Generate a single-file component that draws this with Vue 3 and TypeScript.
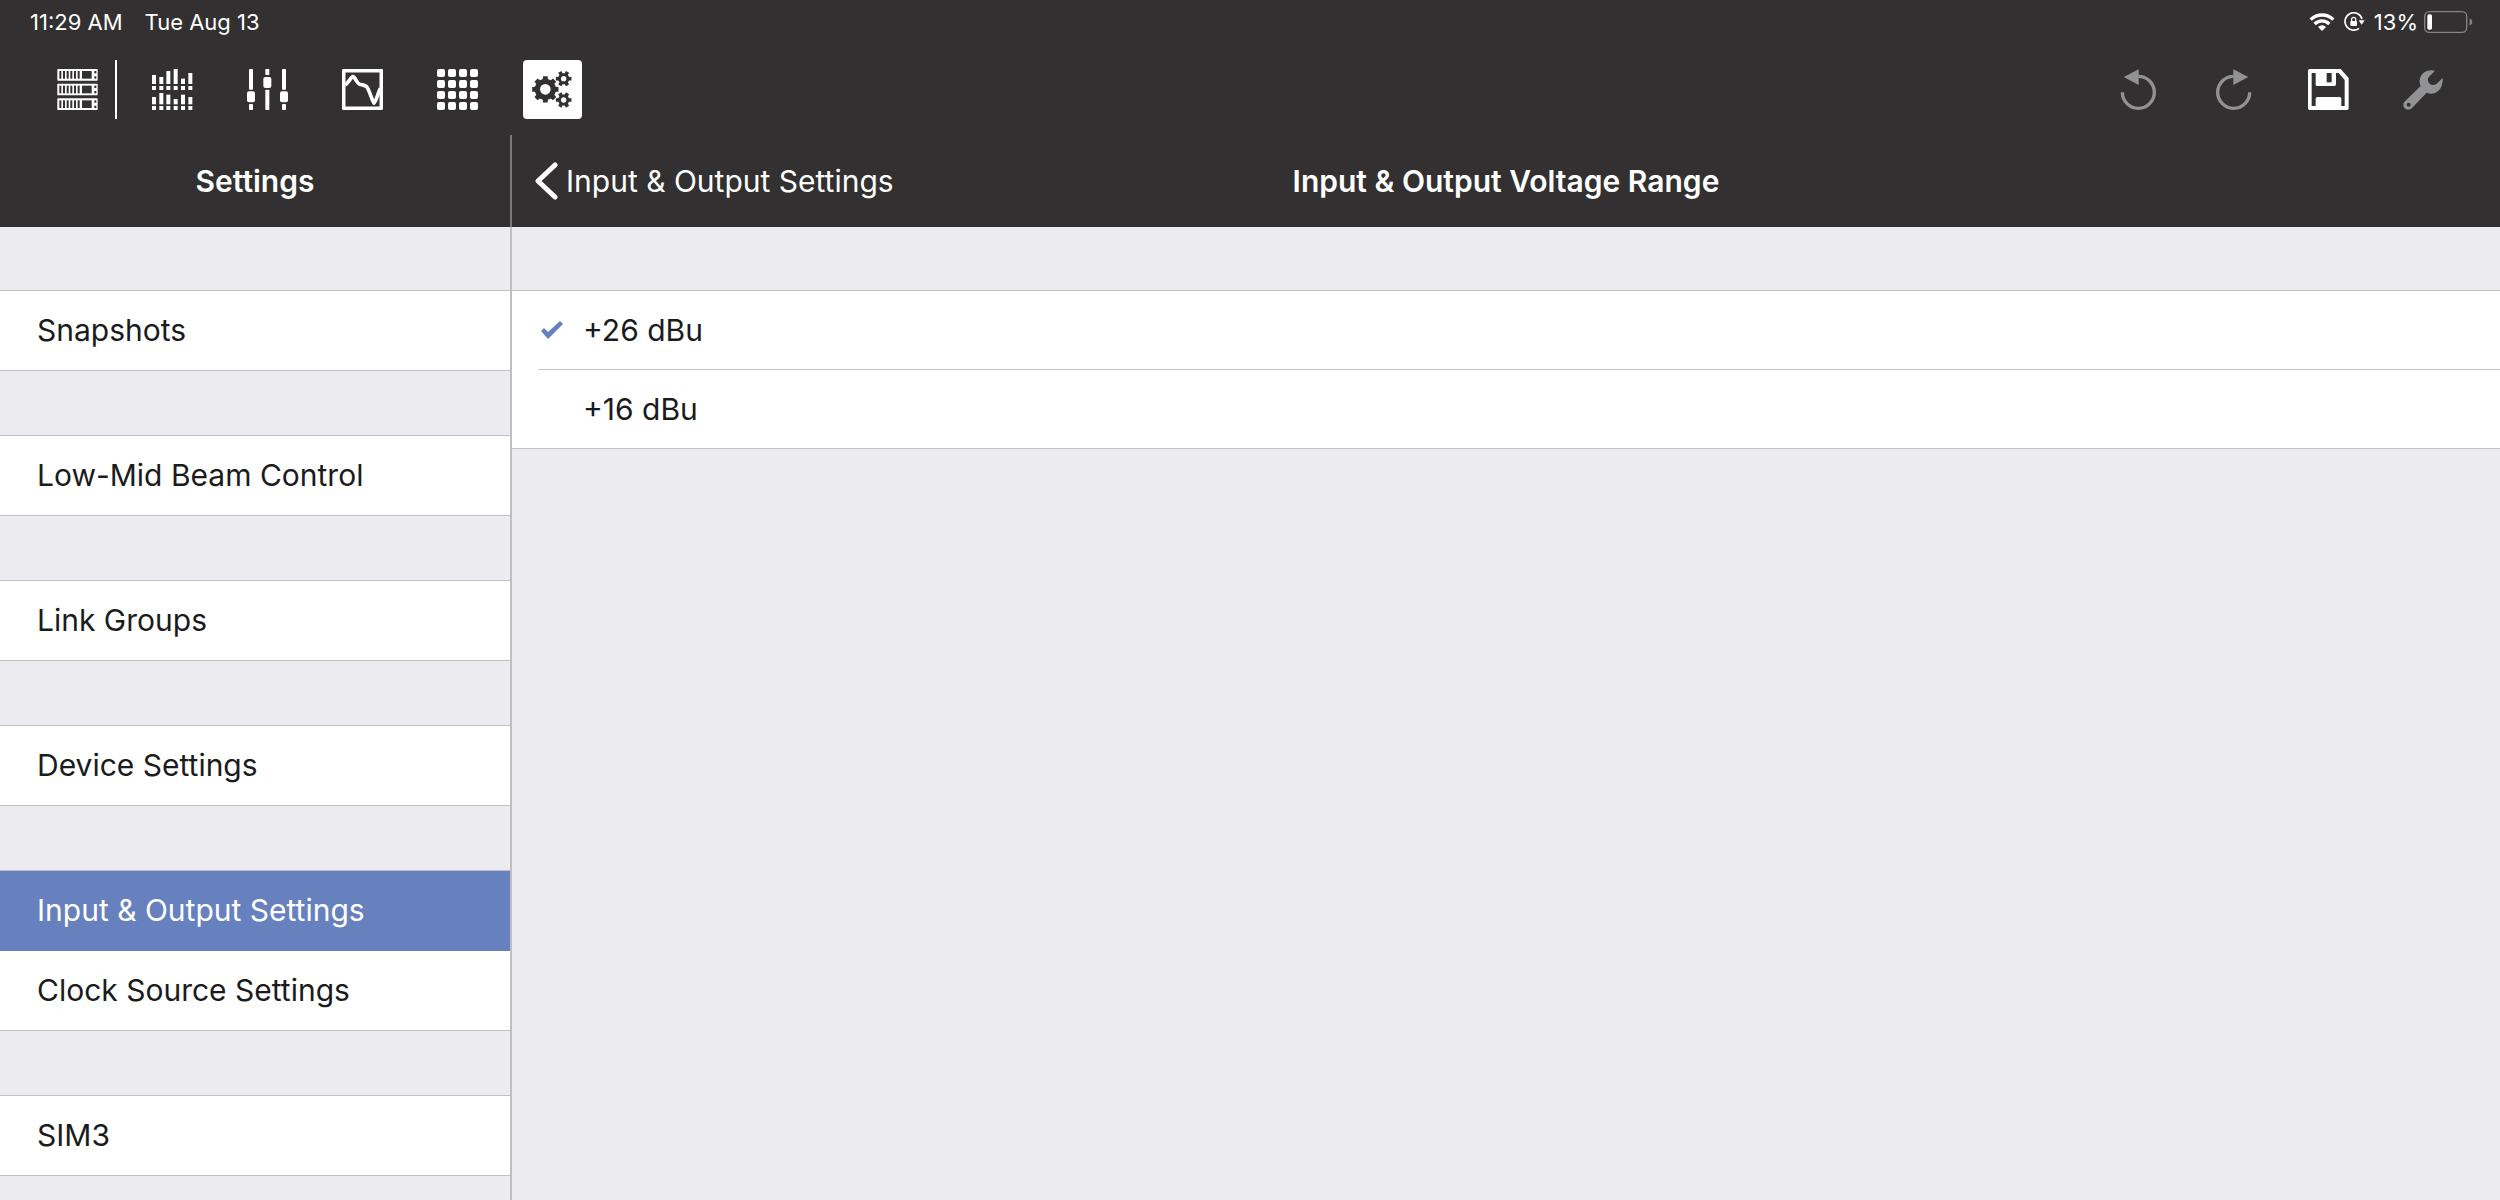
<script setup lang="ts">
import { ref } from 'vue'

interface MenuItem {
  id: string
  label: string
}

const menuGroups: MenuItem[][] = [
  [{ id: 'snapshots', label: 'Snapshots' }],
  [{ id: 'lmbc', label: 'Low-Mid Beam Control' }],
  [{ id: 'link-groups', label: 'Link Groups' }],
  [{ id: 'device', label: 'Device Settings' }],
  [
    { id: 'io', label: 'Input & Output Settings' },
    { id: 'clock', label: 'Clock Source Settings' },
  ],
  [{ id: 'sim3', label: 'SIM3' }],
]

const selectedMenu = ref('io')
const ranges = ['+26 dBu', '+16 dBu']
const selectedRange = ref('+26 dBu')

// Level meter columns: x, top of upper bar, top of lower bar
const meters = [
  [0, 18, 84],
  [22, 24, 72],
  [43, 6, 77],
  [65, 0, 90],
  [87, 29, 77],
  [109, 12, 84],
]

// Outline of a gear with a round hole, drawn with the even-odd rule
function gear(cx: number, cy: number, outer: number, body: number, hole: number, teeth: number): string {
  const step = (Math.PI * 2) / teeth
  const points: string[] = []
  for (let i = 0; i < teeth; i++) {
    const a = i * step
    const corners: [number, number][] = [
      [body, -0.3],
      [outer, -0.22],
      [outer, 0.22],
      [body, 0.3],
    ]
    for (const [r, k] of corners) {
      const x = cx + r * Math.cos(a + k * step)
      const y = cy + r * Math.sin(a + k * step)
      points.push(`${x.toFixed(1)} ${y.toFixed(1)}`)
    }
  }
  return (
    `M${points.join('L')}Z` +
    `M${cx - hole} ${cy}a${hole} ${hole} 0 1 0 ${hole * 2} 0a${hole} ${hole} 0 1 0 ${-hole * 2} 0Z`
  )
}

const gears = gear(67, 88, 40, 32, 16, 8) + gear(122, 56, 24, 17, 8, 6) + gear(122, 120, 24, 17, 8, 6)
</script>

<template>
  <div class="app">
    <header class="status-bar">
      <div class="status-left">
        <span>11:29 AM</span>
        <span>Tue Aug 13</span>
      </div>
      <div class="status-right">
        <svg class="wifi" viewBox="0 0 76 54" fill="none" stroke="#fff" stroke-width="10">
          <path d="M4 20a48 48 0 0 1 68 0" />
          <path d="M16 33a31 31 0 0 1 44 0" />
          <path d="M38 54L26 42a17 17 0 0 1 24 0Z" fill="#fff" stroke="none" />
        </svg>
        <svg class="rotation" viewBox="0 0 63 60">
          <path d="M54 21A26 26 0 1 0 45 49" fill="none" stroke="#fff" stroke-width="5" />
          <path d="M44 25H62L53 38Z" fill="#fff" />
          <rect x="19" y="27" width="20" height="15" rx="2" fill="#fff" />
          <path d="M23 28V22a6 6 0 0 1 12 0v6" fill="none" stroke="#fff" stroke-width="4" />
        </svg>
        <span>13%</span>
        <svg class="battery" viewBox="0 0 147 66">
          <rect x="2" y="2" width="126" height="62" rx="14" fill="none" stroke="#858485" stroke-width="4" />
          <rect x="10" y="10" width="14" height="46" rx="5" fill="#fff" />
          <path d="M137 22q8 3 8 11t-8 11Z" fill="#858485" />
        </svg>
      </div>
    </header>

    <div class="toolbar">
      <nav class="tools" aria-label="Views">
        <button type="button" class="tool" aria-label="Devices">
          <svg viewBox="0 0 123 123">
            <g v-for="y in [0, 44, 88]" :key="y">
              <rect x="1" :y="y" width="121" height="35" rx="2" fill="#fff" />
              <rect v-for="i in 6" :key="i" :x="i * 11 - 4" :y="y + 6" width="6" height="23" fill="#323031" />
              <rect x="75" :y="y + 6" width="29" height="23" fill="#323031" />
              <rect x="112" :y="y + 6" width="6" height="7" fill="#323031" />
              <rect x="112" :y="y + 22" width="6" height="7" fill="#323031" />
            </g>
          </svg>
        </button>
        <span class="tool-divider"></span>
        <button type="button" class="tool" aria-label="Meters">
          <svg viewBox="0 0 123 123" fill="#fff">
            <g v-for="m in meters" :key="m[0]">
              <rect :x="m[0]" :y="m[1]" width="12" :height="45 - m[1]" />
              <rect :x="m[0]" y="51" width="12" height="12" />
              <rect :x="m[0]" :y="m[2]" width="12" :height="106 - m[2]" />
              <rect :x="m[0]" y="111" width="12" height="12" />
            </g>
          </svg>
        </button>
        <button type="button" class="tool" aria-label="Faders">
          <svg viewBox="0 0 123 123" fill="#fff">
            <g v-for="x in [0, 99]" :key="x">
              <rect :x="x + 6" y="0" width="12" height="62" rx="2" />
              <rect :x="x" y="67" width="24" height="33" rx="6" />
              <rect :x="x + 6" y="105" width="12" height="18" rx="2" />
            </g>
            <rect x="55" y="0" width="12" height="18" rx="2" />
            <rect x="49" y="24" width="24" height="33" rx="6" />
            <rect x="55" y="62" width="12" height="61" rx="2" />
          </svg>
        </button>
        <button type="button" class="tool" aria-label="Response">
          <svg viewBox="0 0 123 123" fill="none" stroke="#fff">
            <rect x="5" y="5" width="113" height="113" stroke-width="11" rx="1" />
            <path
              d="M9 48C20 42 26 24 33 23C40 24 44 43 53 46C63 49 70 46 76 56C84 70 92 98 96 102C102 98 106 78 115 58"
              stroke-width="11"
            />
          </svg>
        </button>
        <button type="button" class="tool" aria-label="Matrix">
          <svg viewBox="0 0 123 123" fill="#fff">
            <template v-for="y in 4" :key="y">
              <rect v-for="x in 4" :key="x" :x="x * 33 - 33" :y="y * 33 - 33" width="24" height="24" rx="6" />
            </template>
          </svg>
        </button>
        <button type="button" class="tool active" aria-label="Settings" aria-current="page">
          <svg class="full" viewBox="0 0 177 177">
            <path :d="gears" fill="#323031" fill-rule="evenodd" />
          </svg>
        </button>
      </nav>

      <div class="tools">
        <button type="button" class="tool" aria-label="Undo">
          <svg viewBox="0 0 123 123">
            <path d="M13 70A48 48 0 1 0 61 22" fill="none" stroke="#919294" stroke-width="10" />
            <path d="M17 24L62 1V48Z" fill="#919294" />
          </svg>
        </button>
        <button type="button" class="tool" aria-label="Redo">
          <svg viewBox="0 0 123 123">
            <path d="M110 70A48 48 0 1 1 62 22" fill="none" stroke="#919294" stroke-width="10" />
            <path d="M106 24L61 1V48Z" fill="#919294" />
          </svg>
        </button>
        <button type="button" class="tool" aria-label="Save">
          <svg viewBox="0 0 123 123">
            <path d="M5 0H98L122 27V118q0 5-5 5H5q-5 0-5-5V5q0-5 5-5Z" fill="#fff" />
            <path
              d="M11 12H23V47q0 4 4 4H79q5 0 5-5V12H92L110 33V111H100V89q0-5-5-5H28q-5 0-5 5V111H11Z"
              fill="#323031"
            />
            <rect x="56" y="12" width="15" height="28" fill="#323031" />
          </svg>
        </button>
        <button type="button" class="tool" aria-label="Tools">
          <svg viewBox="0 0 123 123" fill="#919294" fill-rule="evenodd">
            <path
              d="M96 5C72-2 48 15 50 39C50 44 51 48 53 51L6 97C-1 104 0 113 5 118C11 124 21 123 27 117L71 71C95 82 122 62 119 27L101 44C92 50 84 49 79 43C73 37 73 29 78 23ZM17 101a6 6 0 1 1 0 12a6 6 0 1 1 0-12Z"
            />
          </svg>
        </button>
      </div>
    </div>

    <div class="split">
      <aside class="sidebar">
        <div class="bar sidebar-bar">
          <h2>Settings</h2>
        </div>
        <nav class="menu" aria-label="Settings">
          <ul v-for="(group, g) in menuGroups" :key="g" class="group">
            <li v-for="item in group" :key="item.id">
              <a
                href="#"
                class="menu-item"
                :class="{ selected: selectedMenu === item.id }"
                @click.prevent="selectedMenu = item.id"
                >{{ item.label }}</a
              >
            </li>
          </ul>
        </nav>
      </aside>

      <main class="detail">
        <div class="bar detail-bar">
          <button type="button" class="back">
            <svg viewBox="0 0 24 40" fill="none" stroke="#fff" stroke-width="5" stroke-linecap="round">
              <path d="M21 4L4 20L21 36" stroke-linejoin="round" />
            </svg>
            <span>Input &amp; Output Settings</span>
          </button>
          <h1>Input &amp; Output Voltage Range</h1>
        </div>
        <div class="options" role="radiogroup" aria-label="Input &amp; Output Voltage Range">
          <label v-for="range in ranges" :key="range" class="option">
            <span class="option-body">
              <input v-model="selectedRange" type="radio" name="range" :value="range" />
              <span>{{ range }}</span>
            </span>
          </label>
        </div>
      </main>
    </div>
  </div>
</template>

<style>
body {
  margin: 0;
  background: #ecebf0;
}
</style>

<style scoped>
.app {
  display: flex;
  flex-direction: column;
  min-height: 100vh;
  font-family: Inter, 'Liberation Sans', sans-serif;
  font-size: 30px;
  line-height: 40px;
  color: #1b1b1c;
  background: #ecebf0;
}

button {
  padding: 0;
  border: 0;
  background: none;
  font: inherit;
  color: inherit;
}

svg {
  display: block;
}

.status-bar {
  display: flex;
  justify-content: space-between;
  align-items: center;
  height: 44px;
  padding: 0 27px 0 30px;
  font-size: 22px;
  line-height: 28px;
  color: #fff;
  background: #323031;
}

.status-left {
  display: flex;
  gap: 22px;
}

.status-right {
  display: flex;
  align-items: center;
  gap: 9px;
}

.wifi {
  width: 26px;
  height: 18px;
}

.rotation {
  width: 21px;
  height: 20px;
}

.battery {
  width: 49px;
  height: 22px;
  margin-left: -3px;
}

.toolbar {
  display: flex;
  justify-content: space-between;
  align-items: center;
  height: 91px;
  padding: 0 47px 0 48px;
  background: #323031;
}

.tools {
  display: flex;
  gap: 36px;
}

.tool {
  display: flex;
  align-items: center;
  justify-content: center;
  width: 59px;
  height: 59px;
  border-radius: 4px;
}

.tool svg {
  width: 41px;
  height: 41px;
}

.tool.active {
  background: #fff;
}

.tool svg.full {
  width: 59px;
  height: 59px;
}

.tool-divider {
  width: 2px;
  margin: 0 -10px 0 -28px;
  background: #fff;
}

.split {
  display: flex;
  flex: 1;
}

.sidebar {
  display: flex;
  flex-direction: column;
  flex: none;
  width: 512px;
}

.bar {
  display: grid;
  align-items: center;
  height: 92px;
  color: #fff;
  background: #323031;
}

h1,
h2 {
  margin: 0;
  font-size: 30px;
  font-weight: 600;
}

.sidebar-bar {
  justify-content: center;
  border-right: 2px solid #7b7a7c;
}

.menu {
  display: flex;
  flex-direction: column;
  flex: 1;
  gap: 64px;
  padding-top: 63px;
  border-right: 2px solid #bfbec3;
}

.group {
  margin: 0;
  padding: 0;
  list-style: none;
  border-top: 1px solid #c0bfc4;
  background: #fff;
}

.menu-item {
  display: block;
  box-sizing: border-box;
  height: 80px;
  padding: 19px 37px 20px;
  border-bottom: 1px solid #c0bfc4;
  color: inherit;
  text-decoration: none;
}

.menu-item.selected {
  border-color: #6781bf;
  background: #6781bf;
  color: #fff;
}

.detail {
  flex: 1;
}

.detail-bar {
  grid-template-columns: 1fr auto 1fr;
}

.back {
  display: flex;
  align-items: center;
  justify-self: start;
  gap: 8px;
  padding-left: 22px;
}

.back svg {
  width: 24px;
  height: 40px;
}

.options {
  margin-top: 63px;
  border-top: 1px solid #c0bfc4;
  border-bottom: 1px solid #c0bfc4;
  background: #fff;
}

.option {
  display: block;
  padding-left: 27px;
}

.option-body {
  display: flex;
  align-items: center;
  gap: 20px;
  height: 78px;
  padding-left: 2px;
}

.option + .option .option-body {
  border-top: 1px solid #c0bfc4;
}

.option input {
  width: 22px;
  height: 18px;
  margin: 0;
  appearance: none;
}

.option input:checked {
  background: #6781bf;
  clip-path: polygon(0 10px, 3px 7px, 7px 11px, 19px 0, 22px 3px, 7px 18px);
}
</style>
